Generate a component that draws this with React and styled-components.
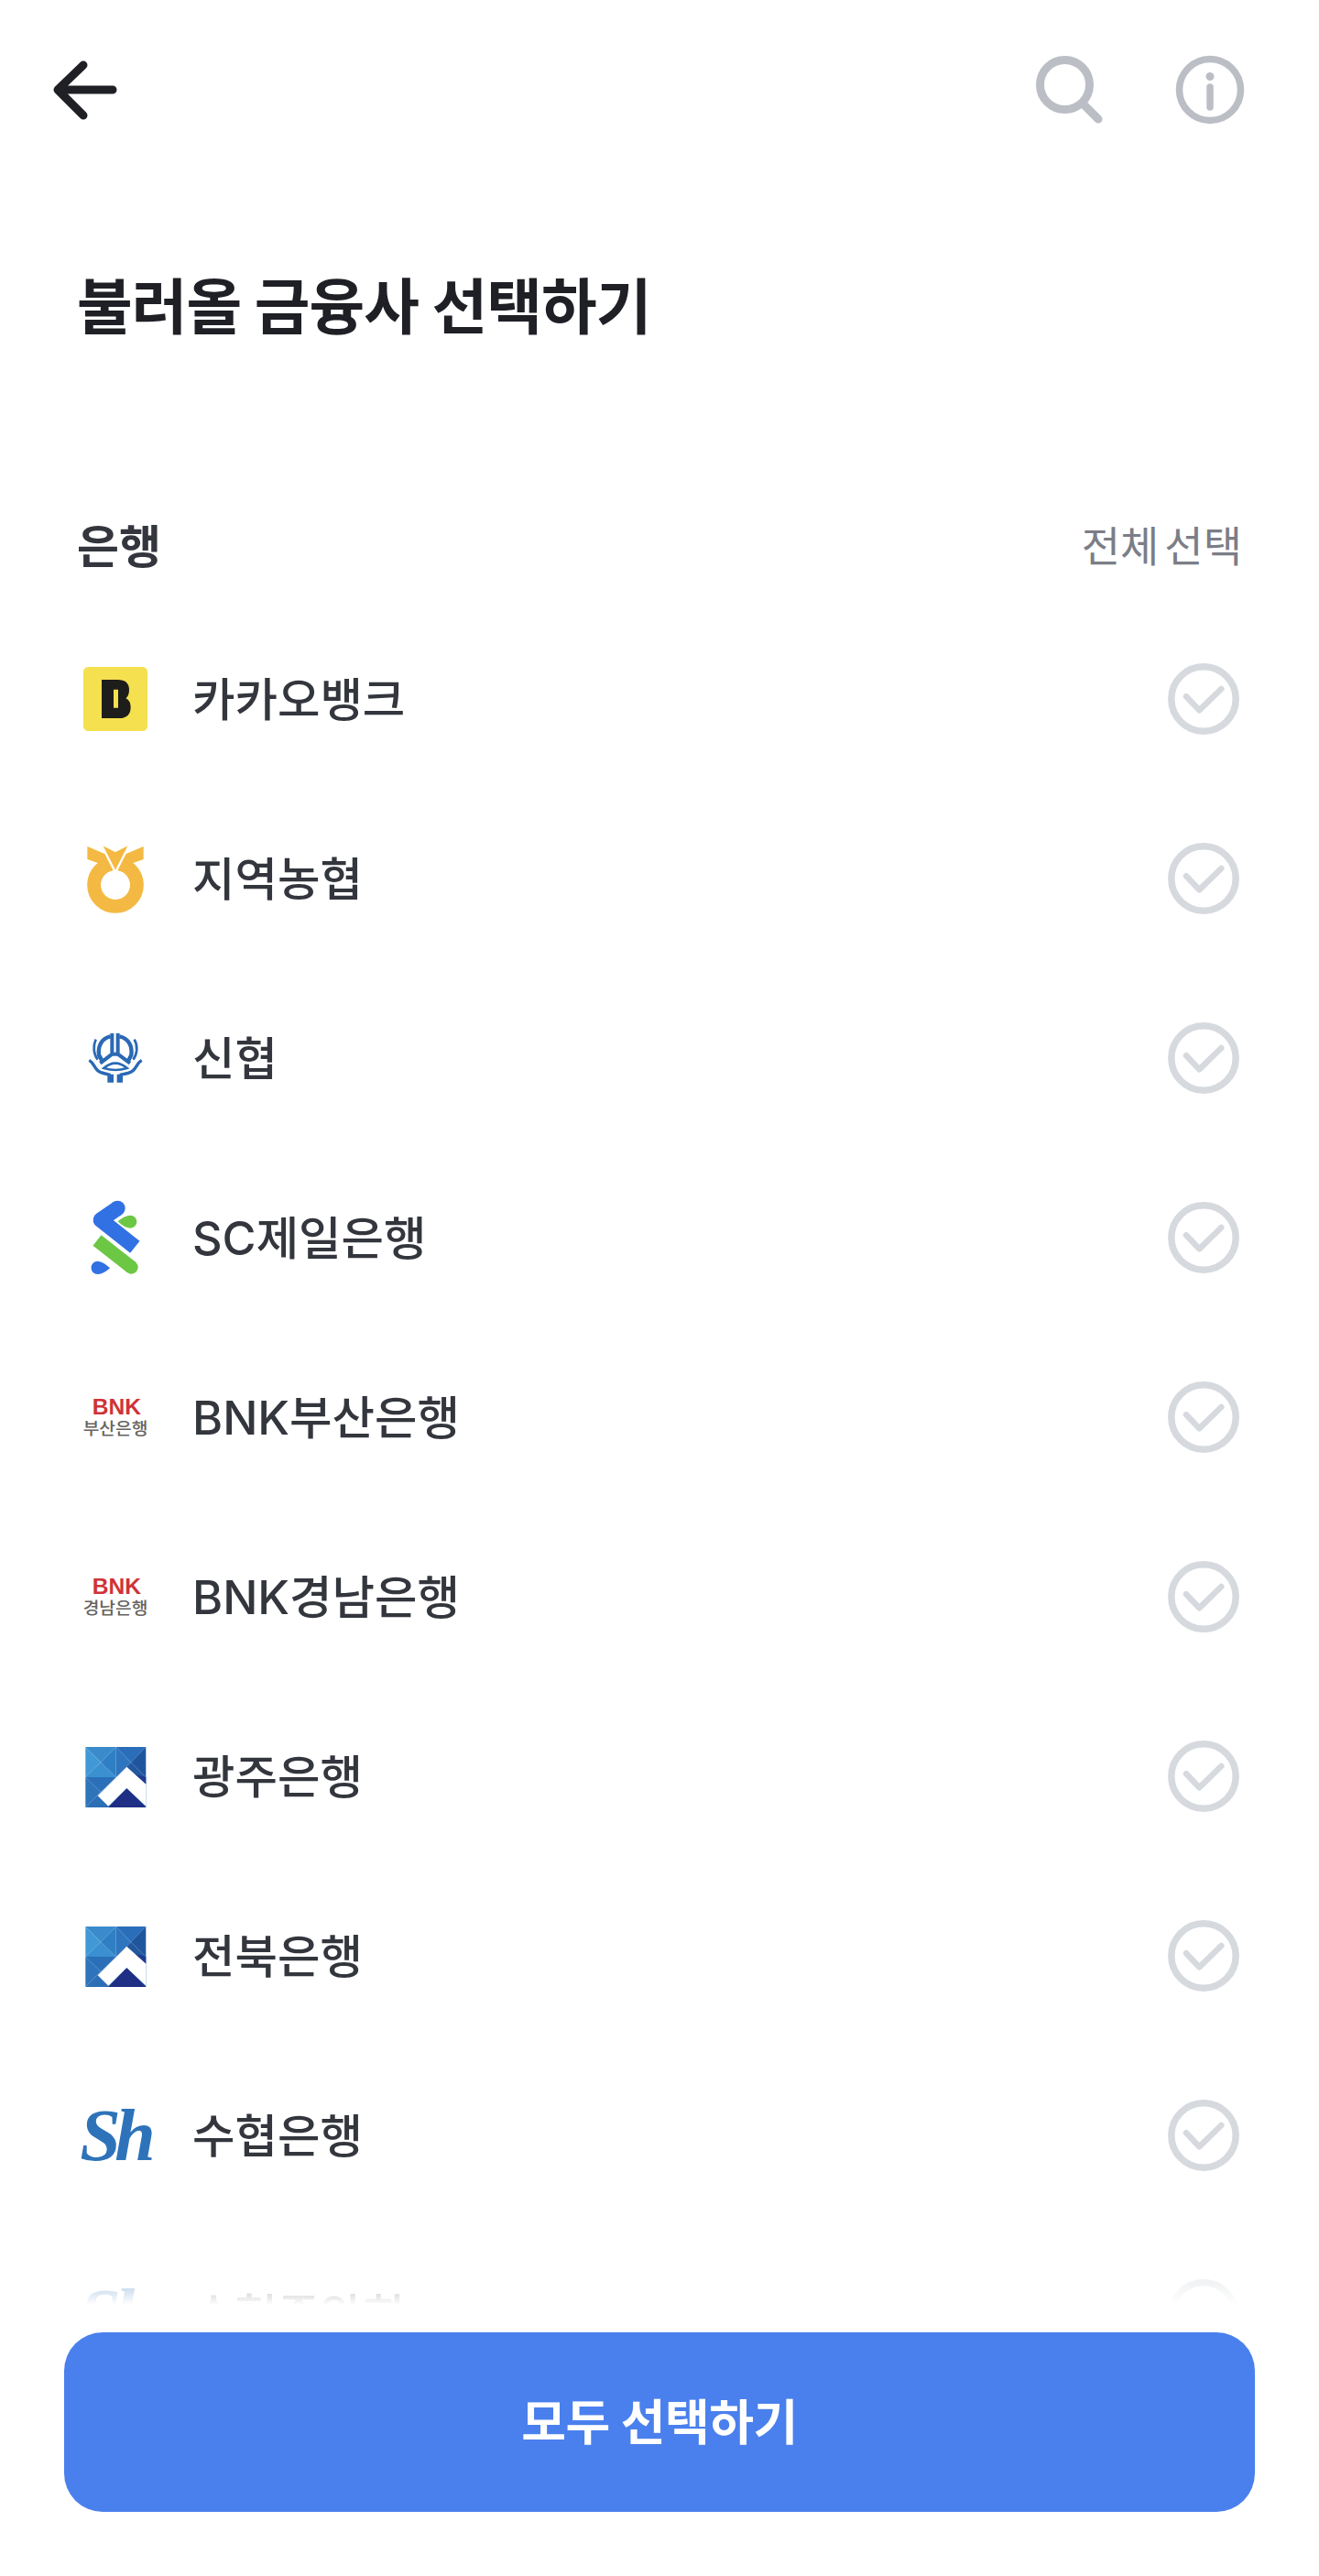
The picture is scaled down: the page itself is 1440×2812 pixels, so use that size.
import React from 'react';
import styled, { createGlobalStyle } from 'styled-components';

const GlobalStyle = createGlobalStyle`
  html, body {
    margin: 0;
    padding: 0;
    background: #fff;
  }
  body {
    font-family: Inter, "Noto Sans CJK KR", "Noto Sans", sans-serif;
  }
`;

const Page = styled.div`
  position: relative;
  display: flex;
  flex-direction: column;
  width: 1440px;
  height: 2812px;
  overflow: hidden;
  background: #fff;
`;

const Header = styled.header`
  display: flex;
  justify-content: space-between;
  align-items: center;
  height: 196px;
  padding: 0 77px 0 50px;
  box-sizing: border-box;
  flex-shrink: 0;
`;

const HeaderIcons = styled.div`
  display: flex;
  gap: 70px;
`;

const Title = styled.h1`
  margin: 0;
  padding: 0 0 0 84px;
  height: 325px;
  font-size: 66px;
  line-height: 279px;
  font-weight: 700;
  letter-spacing: -1px;
  color: #1f2026;
  flex-shrink: 0;
  box-sizing: border-box;
`;

const SectionHead = styled.div`
  display: flex;
  justify-content: space-between;
  align-items: center;
  height: 144px;
  padding: 0 84px 0 84px;
  flex-shrink: 0;
  box-sizing: border-box;
`;

const SectionName = styled.span`
  font-size: 50px;
  font-weight: 700;
  color: #33363d;
`;

const SelectAll = styled.span`
  font-size: 46px;
  font-weight: 400;
  color: #7b7e87;
  word-spacing: -7px;
`;

const List = styled.ul`
  list-style: none;
  margin: 0;
  padding: 0;
  flex: 1;
  overflow: hidden;
`;

const Row = styled.li`
  display: flex;
  align-items: center;
  height: 196px;
  padding: 0 87px 0 86px;
  box-sizing: border-box;
`;

const LogoSvg = styled.svg`
  width: 80px;
  height: 80px;
  flex-shrink: 0;
  overflow: visible;
`;

const BankName = styled.span`
  flex: 1;
  margin-left: 44px;
  padding-bottom: 6px;
  font-size: 50.5px;
  font-weight: 500;
  color: #33363d;
`;

const Dock = styled.div`
  position: absolute;
  left: 0;
  right: 0;
  bottom: 0;
  height: 372px;
  padding: 106px 70px 70px;
  box-sizing: border-box;
  background: linear-gradient(to bottom, rgba(255, 255, 255, 0) 0, #fff 76px);
`;

const SelectButton = styled.button`
  display: block;
  width: 100%;
  height: 196px;
  padding: 0 0 6px;
  border: 0;
  border-radius: 42px;
  background: #4a80ed;
  color: #fff;
  font-family: inherit;
  font-size: 53px;
  font-weight: 700;
  letter-spacing: -0.5px;
`;

const BackIcon = () => (
  <svg width="84" height="84" viewBox="0 0 84 84" fill="none" stroke="#1f2026" strokeWidth="9" strokeLinecap="round" strokeLinejoin="round">
    <path d="M73 42H14M41 15 13 42l28 28" />
  </svg>
);

const SearchIcon = () => (
  <svg width="84" height="84" viewBox="0 0 84 84" fill="none" stroke="#bcbec6" strokeWidth="9" strokeLinecap="round">
    <circle cx="37.5" cy="36.5" r="27" />
    <path d="M57 57 74 74" />
  </svg>
);

const InfoIcon = () => (
  <svg width="84" height="84" viewBox="0 0 84 84" fill="none" stroke="#bcbec6" strokeWidth="7.5">
    <circle cx="42" cy="42" r="33.5" />
    <circle cx="42" cy="27.5" r="4.5" fill="#bcbec6" stroke="none" />
    <path d="M42 39v22" strokeLinecap="round" />
  </svg>
);

const CheckIcon = () => (
  <svg width="78" height="78" viewBox="0 0 78 78" fill="none" stroke="#d6d9de">
    <circle cx="39" cy="39" r="35.2" strokeWidth="7.5" />
    <path d="M20 36.3 34.3 51.3 58.3 28" strokeWidth="6.5" strokeLinecap="round" strokeLinejoin="round" />
  </svg>
);

const KakaoLogo = () => (
  <LogoSvg viewBox="78 69 240 240">
    <rect x="93" y="84" width="210" height="210" rx="16" fill="#f5e04f" />
    <path
      fillRule="evenodd"
      fill="#1d1d1b"
      d="M153 126H205Q243 126 243 160Q243 178 232 187Q248 195 248 215Q248 252 210 252H153ZM192 158V218H207V158Z"
    />
  </LogoSvg>
);

const NonghyupLogo = () => (
  <LogoSvg viewBox="78 57 240 240">
    <circle cx="198" cy="198" r="70" fill="none" stroke="#f4b942" strokeWidth="45" />
    <path fill="#f4b942" d="M106 72 168 98 195 150H160L138 125 106 114Z" />
    <path fill="#f4b942" d="M290 72 228 98 201 150H236L258 125 290 114Z" />
    <path fill="#f4b942" stroke="#fff" strokeWidth="7" d="M150 62 198 87 246 62 198 157Z" />
    <circle cx="198" cy="198" r="47" fill="#fff" />
  </LogoSvg>
);

const ShinhyupLogo = () => (
  <LogoSvg viewBox="78 75 240 240">
    <g fill="none" stroke="#2a69b4" strokeWidth="12">
      <path d="M182 124C152 130 140 158 144 185L157 208" strokeWidth="13" />
      <path d="M211 124C242 130 254 158 250 185L238 208" strokeWidth="13" />
      <path d="M187 114V182L148 212M206 114V182L246 212M187 182H206" />
      <path d="M134 134C124 155 126 182 140 200M260 134C272 155 270 182 256 200" strokeWidth="8" />
      <path d="M160 228Q198 196 236 228Q198 240 160 228Z" strokeWidth="8" />
      <path d="M112 202C130 212 130 236 150 242 160 246 172 248 182 250M284 202C266 212 266 236 246 242 236 246 224 248 212 250" strokeWidth="10" />
    </g>
    <path fill="#2a69b4" d="M172 248H192V275H172ZM203 248H222V275H203Z" />
  </LogoSvg>
);

const ScLogo = () => (
  <LogoSvg viewBox="78 63 240 240">
    <circle cx="205" cy="87" r="25" fill="#3271e3" />
    <path d="M205 87 150 125 262 214" fill="none" stroke="#3271e3" strokeWidth="50" strokeLinejoin="round" />
    <path d="M138 192 250 280" fill="none" stroke="#6cc744" strokeWidth="44" />
    <circle cx="250" cy="280" r="22" fill="#6cc744" />
    <path fill="#6cc744" d="M206 130Q228 110 247 110A21 21 0 0 1 247 152Q228 152 206 130Z" />
    <path fill="#3271e3" d="M180 283Q160 262 140 260A21 21 0 0 0 140 303Q160 302 180 283Z" />
  </LogoSvg>
);

const BnkLogo = ({ branch }) => (
  <LogoSvg viewBox="78 18 240 240">
    <text x="202" y="130" textAnchor="middle" textLength="160" lengthAdjust="spacingAndGlyphs" fontFamily="'Liberation Sans', sans-serif" fontWeight="700" fontSize="70" fill="#cf3338">BNK</text>
    <text x="198" y="196" textAnchor="middle" textLength="212" lengthAdjust="spacingAndGlyphs" fontFamily="'Noto Sans CJK KR', sans-serif" fontWeight="500" fontSize="56" fill="#66635f">{branch}</text>
  </LogoSvg>
);

const GwangjuLogo = () => (
  <LogoSvg viewBox="78 54 240 240">
    <path fill="#3a8bcb" d="M100 78H200L150 128Z" />
    <path fill="#4099d6" d="M100 78V177L150 128Z" />
    <path fill="#3a90d0" d="M100 177H200L150 128Z" />
    <path fill="#2f7fc5" d="M200 78V177L150 128Z" />
    <path fill="#2a6db8" d="M200 78H298L249 128Z" />
    <path fill="#2e75bf" d="M200 78V177L249 128Z" />
    <path fill="#1f559c" d="M298 78V177L249 128Z" />
    <path fill="#22589f" d="M200 177H298L249 128Z" />
    <path fill="#2d74bb" d="M100 177V276L150 226Z" />
    <path fill="#2a6fb8" d="M100 177H200L150 226Z" />
    <path fill="#2c6fb6" d="M200 177V276H100L150 226Z" />
    <path fill="#2566ae" d="M200 177H298V276H200Z" />
    <path fill="#1f2f85" d="M175 276 235 213 298 276Z" />
    <path fill="#1f3b8f" d="M298 176V200L262 168Z" />
    <path fill="#fff" d="M140 238 235 143 298 200V272L235 213 175 272Z" />
  </LogoSvg>
);

const ShLogo = () => (
  <LogoSvg viewBox="78 30 240 240">
    <text x="82" y="232" fontFamily="'Liberation Serif', serif" fontStyle="italic" fontWeight="700" fontSize="240" letterSpacing="-20" fill="#2e73ba">Sh</text>
  </LogoSvg>
);

const banks = [
  { name: '카카오뱅크', logo: <KakaoLogo /> },
  { name: '지역농협', logo: <NonghyupLogo /> },
  { name: '신협', logo: <ShinhyupLogo /> },
  { name: 'SC제일은행', logo: <ScLogo /> },
  { name: 'BNK부산은행', logo: <BnkLogo branch="부산은행" /> },
  { name: 'BNK경남은행', logo: <BnkLogo branch="경남은행" /> },
  { name: '광주은행', logo: <GwangjuLogo /> },
  { name: '전북은행', logo: <GwangjuLogo /> },
  { name: '수협은행', logo: <ShLogo /> },
  { name: '수협중앙회', logo: <ShLogo /> },
];

export default function App() {
  return (
    <Page>
      <GlobalStyle />
      <Header>
        <BackIcon />
        <HeaderIcons>
          <SearchIcon />
          <InfoIcon />
        </HeaderIcons>
      </Header>
      <Title>불러올 금융사 선택하기</Title>
      <SectionHead>
        <SectionName>은행</SectionName>
        <SelectAll>전체 선택</SelectAll>
      </SectionHead>
      <List>
        {banks.map((bank) => (
          <Row key={bank.name}>
            {bank.logo}
            <BankName>{bank.name}</BankName>
            <CheckIcon />
          </Row>
        ))}
      </List>
      <Dock>
        <SelectButton>모두 선택하기</SelectButton>
      </Dock>
    </Page>
  );
}
